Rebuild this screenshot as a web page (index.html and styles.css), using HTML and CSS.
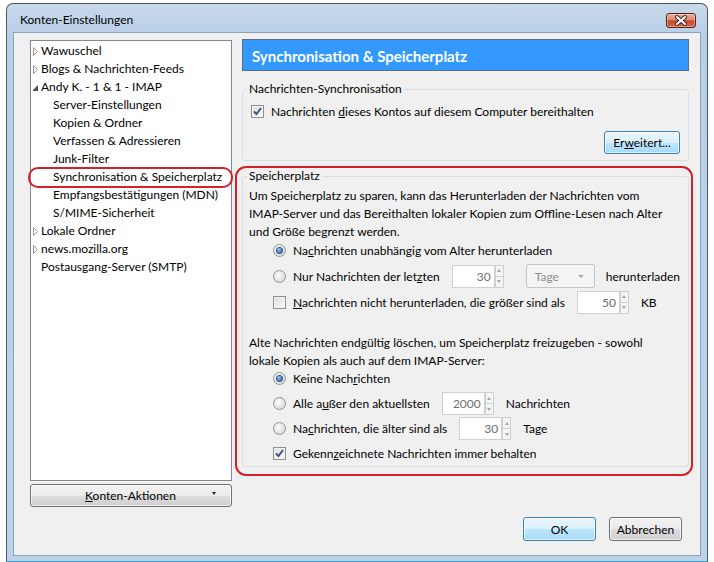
FILE: index.html
```html
<!DOCTYPE html>
<html lang="de">
<head>
    <meta charset="UTF-8">
    <title>Konten-Einstellungen</title>
    <link rel="stylesheet" href="styles.css">
</head>
<body>
    <div class="window">
        <div class="titlebar">
            <span class="title">Konten-Einstellungen</span>
            <span class="close-btn">
                <svg width="28" height="13" viewBox="0 0 28 13">
                    <path d="M10 3 L18 10 M18 3 L10 10" stroke="#3a2a26" stroke-width="4" stroke-linecap="round"/>
                    <path d="M10 3 L18 10 M18 3 L10 10" stroke="#fff" stroke-width="2" stroke-linecap="round"/>
                </svg>
            </span>
        </div>

        <div class="client">
            <div class="main">
                <!-- account tree -->
                <div class="sidebar">
                    <ul class="tree">
                        <li class="item"><svg class="twisty" width="5" height="9" viewBox="0 0 5 9"><path d="M0.5 0.5 L4.5 4.5 L0.5 8.5 Z" fill="#fff" stroke="#9a9a9a"/></svg>Wawuschel</li>
                        <li class="item"><svg class="twisty" width="5" height="9" viewBox="0 0 5 9"><path d="M0.5 0.5 L4.5 4.5 L0.5 8.5 Z" fill="#fff" stroke="#9a9a9a"/></svg>Blogs &amp; Nachrichten-Feeds</li>
                        <li class="item"><svg class="twisty" width="5" height="9" viewBox="0 0 5 9"><path d="M5 2 L5 8 L-1 8 Z" fill="#505050"/></svg>Andy K. - 1 &amp; 1 - IMAP</li>
                        <li class="item child">Server-Einstellungen</li>
                        <li class="item child">Kopien &amp; Ordner</li>
                        <li class="item child">Verfassen &amp; Adressieren</li>
                        <li class="item child">Junk-Filter</li>
                        <li class="item child current">Synchronisation &amp; Speicherplatz</li>
                        <li class="item child">Empfangsbestätigungen (MDN)</li>
                        <li class="item child">S/MIME-Sicherheit</li>
                        <li class="item"><svg class="twisty" width="5" height="9" viewBox="0 0 5 9"><path d="M0.5 0.5 L4.5 4.5 L0.5 8.5 Z" fill="#fff" stroke="#9a9a9a"/></svg>Lokale Ordner</li>
                        <li class="item"><svg class="twisty" width="5" height="9" viewBox="0 0 5 9"><path d="M0.5 0.5 L4.5 4.5 L0.5 8.5 Z" fill="#fff" stroke="#9a9a9a"/></svg>news.mozilla.org</li>
                        <li class="item leaf">Postausgang-Server (SMTP)</li>
                    </ul>
                    <button class="btn menu-btn">
                        <span class="menu-label"><u>K</u>onten-Aktionen</span>
                        <span class="drop-arrow"></span>
                    </button>
                </div>

                <!-- settings pane -->
                <div class="pane">
                    <div class="pane-header">Synchronisation &amp; Speicherplatz</div>

                    <fieldset class="group">
                        <legend>Nachrichten-Synchronisation</legend>
                        <div class="check-row">
                            <span class="checkbox"><svg width="11" height="11" viewBox="0 0 11 11"><path d="M2 5.5 L4.5 8 L9 2" fill="none" stroke="#3f5281" stroke-width="2"/></svg></span>
                            <span class="lbl">Nachrichten <u>d</u>ieses Kontos auf diesem Computer bereithalten</span>
                        </div>
                        <div class="group-actions">
                            <button class="btn btn-hot">Er<u>w</u>eitert...</button>
                        </div>
                    </fieldset>

                    <div class="marked">
                        <fieldset class="group">
                            <legend>Speicherplatz</legend>
                            <p class="desc">Um Speicherplatz zu sparen, kann das Herunterladen der Nachrichten vom<br>IMAP-Server und das Bereithalten lokaler Kopien zum Offline-Lesen nach Alter<br>und Größe begrenzt werden.</p>

                            <div class="opts">
                                <div class="opt">
                                    <span class="radio on"></span>
                                    <span class="lbl">Na<u>c</u>hrichten unabhängig vom Alter herunterladen</span>
                                </div>
                                <div class="opt">
                                    <span class="radio"></span>
                                    <span class="lbl">Nur Nachrichten der let<u>z</u>ten</span>
                                    <span class="spin"><span class="spin-field">30</span><span class="spin-btns"><span class="up"></span><span class="down"></span></span></span>
                                    <span class="select">Tage<span class="select-arrow"></span></span>
                                    <span class="lbl">herunterladen</span>
                                </div>
                                <div class="opt">
                                    <span class="checkbox"></span>
                                    <span class="lbl"><u>N</u>achrichten nicht herunterladen, die größer sind als</span>
                                    <span class="spin"><span class="spin-field">50</span><span class="spin-btns"><span class="up"></span><span class="down"></span></span></span>
                                    <span class="lbl">KB</span>
                                </div>
                            </div>

                            <p class="desc second">Alte Nachrichten endgültig löschen, um Speicherplatz freizugeben - sowohl<br>lokale Kopien als auch auf dem IMAP-Server:</p>

                            <div class="opts tight">
                                <div class="opt">
                                    <span class="radio on"></span>
                                    <span class="lbl">Keine Nach<u>r</u>ichten</span>
                                </div>
                                <div class="opt">
                                    <span class="radio"></span>
                                    <span class="lbl">Alle a<u>u</u>ßer den aktuellsten</span>
                                    <span class="spin"><span class="spin-field">2000</span><span class="spin-btns"><span class="up"></span><span class="down"></span></span></span>
                                    <span class="lbl">Nachrichten</span>
                                </div>
                                <div class="opt">
                                    <span class="radio"></span>
                                    <span class="lbl">Na<u>c</u>hrichten, die älter sind als</span>
                                    <span class="spin"><span class="spin-field">30</span><span class="spin-btns"><span class="up"></span><span class="down"></span></span></span>
                                    <span class="lbl">Tage</span>
                                </div>
                                <div class="opt">
                                    <span class="checkbox"><svg width="11" height="11" viewBox="0 0 11 11"><path d="M2 5.5 L4.5 8 L9 2" fill="none" stroke="#3f5281" stroke-width="2"/></svg></span>
                                    <span class="lbl">Gekenn<u>z</u>eichnete Nachrichten immer behalten</span>
                                </div>
                            </div>
                        </fieldset>
                    </div>
                </div>
            </div>

            <div class="footer">
                <button class="btn btn-hot">OK</button>
                <button class="btn">Abbrechen</button>
            </div>
        </div>
    </div>
</body>
</html>
```

FILE: styles.css
```css
body {
    margin: 0;
    background: #fff;
    font-family: "Lato", "Liberation Sans", sans-serif;
    font-size: 12px;
    color: #000;
    overflow: hidden;
}

/* window frame */
.window {
    margin: 3px 6px 0;
    height: 559px;
    box-sizing: border-box;
    border: 1px solid #4b5866;
    border-bottom: 1px solid #3fa3d2;
    border-radius: 7px 7px 0 0;
    background: linear-gradient(#c8d8ea, #b9cfe7 30px, #bcd2e9);
    padding: 0 6px 5px;
    display: flex;
    flex-direction: column;
}

.titlebar {
    height: 28px;
    display: flex;
    justify-content: space-between;
    align-items: flex-start;
    padding: 0 5px 0 7px;
}

.title {
    margin-top: 8px;
    line-height: 16px;
}

.close-btn {
    margin-top: 9px;
    width: 28px;
    height: 13px;
    border: 1px solid #5a2418;
    border-radius: 3px;
    background: linear-gradient(#eba996 0%, #dc8b74 45%, #c6472b 52%, #d26a4f 100%);
    box-shadow: inset 0 0 0 1px rgba(255, 255, 255, 0.35);
}

.close-btn svg { display: block; }

.client {
    flex: 1;
    background: #f0f0f0;
    border: 1px solid #8ea3ba;
    padding: 7px 10px 0 16px;
    display: flex;
    flex-direction: column;
}

.main {
    display: grid;
    grid-template-columns: 202px 1fr;
    column-gap: 10px;
    height: 467px;
}

/* account tree */
.sidebar {
    display: flex;
    flex-direction: column;
    gap: 3px;
}

.tree {
    flex: 1;
    margin: 0;
    padding: 1px 0 0;
    list-style: none;
    background: #fff;
    border: 1px solid #828790;
}

.item {
    height: 18px;
    line-height: 18px;
    padding-left: 2px;
    display: flex;
    align-items: center;
    white-space: nowrap;
}

.twisty {
    margin-right: 3px;
    flex: none;
}

.item.child { padding-left: 22px; }
.item.leaf { padding-left: 10px; }

.item.current { position: relative; }

.item.current::after {
    content: "";
    position: absolute;
    inset: -1px -2px -2px -3px;
    border: 2px solid #d3202a;
    border-radius: 10px;
}

/* buttons */
.btn {
    font: inherit;
    color: #000;
    height: 23px;
    padding: 0;
    border: 1px solid #707070;
    border-radius: 3px;
    background: linear-gradient(#f2f2f2 0%, #ebebeb 50%, #dddddd 51%, #cfcfcf 100%);
    box-shadow: inset 0 0 0 1px rgba(255, 255, 255, 0.7);
}

.btn-hot {
    border-color: #3c7fb1;
    background: linear-gradient(#eaf6fd 0%, #d9f0fc 50%, #bee6fd 51%, #a7d9f5 100%);
}

.menu-btn {
    display: flex;
    align-items: center;
    padding: 0 15px 0 18px;
}

.menu-label {
    flex: 1;
    text-align: center;
}

.drop-arrow {
    width: 0;
    height: 0;
    border-left: 2px solid transparent;
    border-right: 2px solid transparent;
    border-top: 3px solid #222;
    margin-bottom: 5px;
}

/* right pane */
.pane-header {
    height: 32px;
    box-sizing: border-box;
    margin: -1px 1px 0 0;
    padding: 2px 0 0 9px;
    background: #3399ff;
    border: 1px solid #5c6f80;
    color: #fff;
    font-weight: bold;
    font-size: 15px;
    line-height: 28px;
}

.group {
    margin: 10px 1px 0 0;
    padding: 0 8px 6px 6px;
    border: 1px solid #d5dfe5;
    border-radius: 3px;
    min-width: 0;
}

.group legend {
    padding: 0 2px;
    margin-left: -2px;
    line-height: 16px;
}

.check-row {
    margin-top: 5px;
    height: 18px;
    display: flex;
    align-items: center;
}

.check-row .checkbox { margin: 0 7px 0 2px; }

.group-actions {
    margin-top: 11px;
    display: flex;
    justify-content: flex-end;
}

.group-actions .btn {
    width: 76px;
}

.marked {
    position: relative;
    margin-top: 7px;
}

.marked .group { margin-top: 0; padding-bottom: 0; }

.marked::after {
    content: "";
    position: absolute;
    inset: -2px -3px -9px -7px;
    border: 2px solid #d3202a;
    border-radius: 11px;
}

.desc {
    margin: 3px 0 0;
    line-height: 18px;
    white-space: nowrap;
}

.desc.second { margin-top: 19px; }

.opts { margin-top: -4px; }

.opt {
    height: 26px;
    padding-left: 24px;
    display: flex;
    align-items: center;
    white-space: nowrap;
}

.opts.tight .opt { height: 25px; }

/* check and radio controls */
.checkbox {
    width: 13px;
    height: 13px;
    box-sizing: border-box;
    flex: none;
    border: 1px solid #8f8f8f;
    background: linear-gradient(135deg, #dcdcdc, #fbfbfb);
    box-shadow: inset 0 0 0 1px #f4f4f4;
    display: flex;
    align-items: center;
    justify-content: center;
    margin-right: 7px;
}

.checkbox svg { display: block; }

.radio {
    width: 13px;
    height: 13px;
    box-sizing: border-box;
    flex: none;
    border: 1px solid #929292;
    border-radius: 50%;
    background: radial-gradient(circle at 40% 35%, #fcfcfc, #dadada 80%);
    margin-right: 7px;
    display: flex;
    align-items: center;
    justify-content: center;
}

.radio.on::before {
    content: "";
    width: 5px;
    height: 5px;
    border-radius: 50%;
    background: radial-gradient(circle at 40% 35%, #9fd0f4, #2a5ea3 70%);
    box-shadow: 0 0 0 1px #2d5a92;
}

/* number spinners */
.spin {
    display: inline-flex;
    margin: 0 12px 0 12px;
}

.spin-field {
    width: 43px;
    height: 23px;
    box-sizing: border-box;
    border: 1px solid #ccd1d8;
    background: #fff;
    text-align: right;
    padding-right: 3px;
    line-height: 21px;
    color: #6d6d6d;
}

.spin-btns {
    width: 9px;
    display: flex;
    flex-direction: column;
}

.spin-btns span {
    flex: 1;
    border: 1px solid #cfcfcf;
    background: #f4f4f4;
    display: flex;
    align-items: center;
    justify-content: center;
}

.spin-btns .up { border-bottom-width: 0; }

.spin-btns .up::before,
.spin-btns .down::before {
    content: "";
    width: 0;
    height: 0;
    border-left: 2px solid transparent;
    border-right: 2px solid transparent;
}

.spin-btns .up::before { border-bottom: 3px solid #a4a4a4; }
.spin-btns .down::before { border-top: 3px solid #a4a4a4; }

.select {
    width: 69px;
    height: 24px;
    box-sizing: border-box;
    margin: 0 11px 0 10px;
    padding: 0 10px 0 8px;
    border: 1px solid #c6c6c6;
    border-radius: 2px;
    background: #f4f4f4;
    color: #8b8b8b;
    display: flex;
    align-items: center;
    justify-content: space-between;
}

.select-arrow {
    width: 0;
    height: 0;
    border-left: 3px solid transparent;
    border-right: 3px solid transparent;
    border-top: 3px solid #a9a9a9;
}

/* dialog buttons */
.footer {
    margin-top: 10px;
    padding-right: 8px;
    display: flex;
    justify-content: flex-end;
    gap: 13px;
}

.footer .btn {
    width: 73px;
    height: 24px;
}
```
